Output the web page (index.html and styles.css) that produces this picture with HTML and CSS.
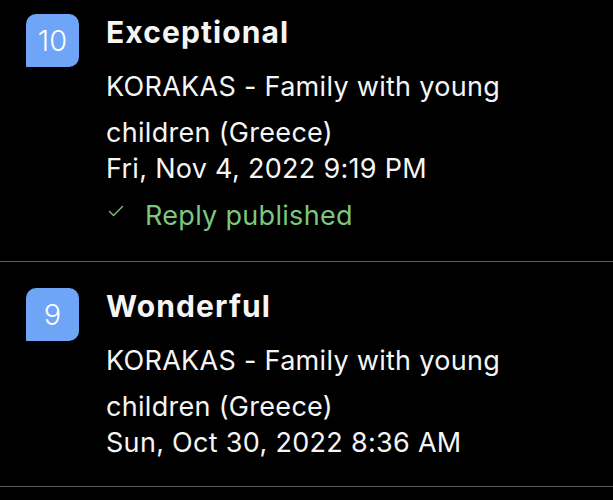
FILE: index.html
```html
<!DOCTYPE html>
<html lang="en">
<head>
  <meta charset="UTF-8">
  <meta name="viewport" content="width=device-width, initial-scale=1.0">
  <title>Reviews</title>
  <link rel="stylesheet" href="styles.css">
</head>
<body>
  <div class="review-list">
    <div class="review">
      <div class="score">10</div>
      <div class="review-body">
        <div class="review-title">Exceptional</div>
        <div class="guest">KORAKAS - Family with young children (Greece)</div>
        <div class="review-date">Fri, Nov 4, 2022 9:19 PM</div>
        <div class="reply-status">
          <svg class="check" width="16" height="12" viewBox="0 0 16 12">
            <path d="M1.5 6.5 L5.5 10.5 L14.5 1.5" fill="none" stroke="currentColor" stroke-width="1.3" stroke-linecap="round" stroke-linejoin="round"/>
          </svg>
          <span>Reply published</span>
        </div>
      </div>
    </div>
    <div class="review">
      <div class="score">9</div>
      <div class="review-body">
        <div class="review-title">Wonderful</div>
        <div class="guest">KORAKAS - Family with young children (Greece)</div>
        <div class="review-date">Sun, Oct 30, 2022 8:36 AM</div>
      </div>
    </div>
  </div>
</body>
</html>
```

FILE: styles.css
```css
body {
  margin: 0;
  padding: 0;
  background-color: #000;
  color: #f5f5f5;
  font-family: Inter, "Noto Sans", sans-serif;
  overflow: hidden;
}

/* screenshot is cropped slightly into the first row */
.review-list {
  margin-top: -12px;
}

.review {
  display: flex;
  gap: 27px;
  padding: 26px 0 30px 26px;
  border-bottom: 1px solid #5c5c5c;
}

.score {
  flex: none;
  width: 53px;
  height: 53px;
  border-radius: 10px 10px 10px 0;
  background-color: #6fa5f6;
  color: #fff;
  font-size: 29px;
  font-weight: 300;
  display: flex;
  align-items: center;
  justify-content: center;
}

.review-body {
  flex: 1;
  padding-right: 100px;
}

.review-title {
  font-size: 30px;
  font-weight: 700;
  letter-spacing: 1.1px;
  line-height: 36px;
}

.guest {
  margin-top: 14px;
  font-size: 27px;
  letter-spacing: 0.3px;
  line-height: 46px;
}

.review-date {
  font-size: 27px;
  letter-spacing: 0.3px;
  line-height: 26px;
}

.reply-status {
  margin-top: 19px;
  display: flex;
  align-items: center;
  gap: 21px;
  color: #7cc67f;
  font-size: 27px;
  letter-spacing: 0.3px;
  line-height: 30px;
}

.check {
  margin-left: 2px;
  margin-top: -10px;
}
```
